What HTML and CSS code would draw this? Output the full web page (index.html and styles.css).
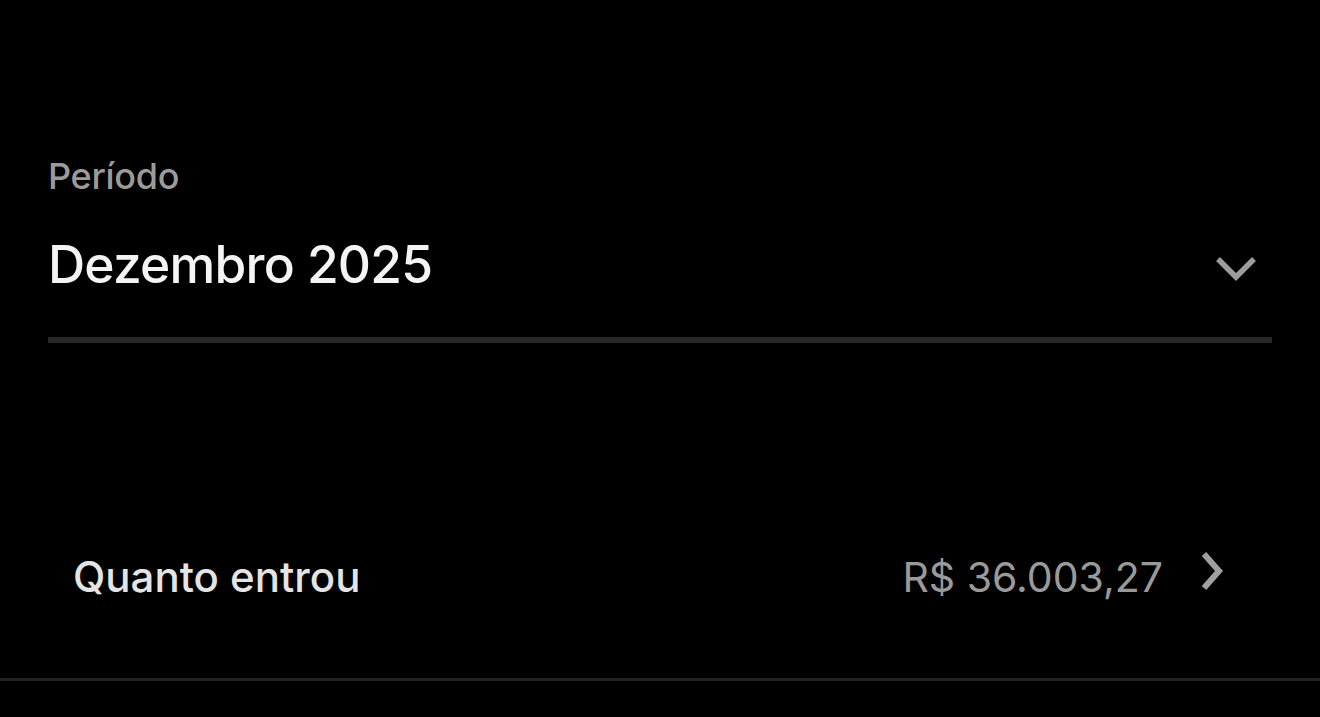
FILE: index.html
```html
<!DOCTYPE html>
<html lang="pt-BR">
<head>
    <meta charset="UTF-8">
    <title>Período</title>
    <link rel="stylesheet" href="styles.css">
</head>
<body>
<div class="period">
    <p class="period-label">Período</p>
    <div class="period-select">
        <span class="period-value">Dezembro 2025</span>
        <svg class="chevron-down" width="40" height="26" viewBox="0 0 40 26">
            <polyline points="2,3 20,21 38,3" fill="none" stroke="#9c9c9c" stroke-width="5.5"/>
        </svg>
    </div>
</div>
<div class="summary-row">
    <span class="row-title">Quanto entrou</span>
    <div class="row-end">
        <span class="row-amount">R$ 36.003,27</span>
        <svg class="chevron-right" width="24" height="40" viewBox="0 0 24 40">
            <polyline points="4,3 19,20 4,37" fill="none" stroke="#a0a0a0" stroke-width="6"/>
        </svg>
    </div>
</div>
</body>
</html>
```

FILE: styles.css
```css
body {
    margin: 0;
    background: #000000;
    font-family: Inter, "Noto Sans", sans-serif;
    overflow: hidden;
}

.period {
    padding: 152px 48px 0 48px;
}

.period-label {
    margin: 0;
    font-size: 36px;
    line-height: 48px;
    font-weight: 500;
    color: #9b9b9b;
    letter-spacing: -0.3px;
}

.period-select {
    display: flex;
    align-items: center;
    justify-content: space-between;
    padding: 34px 16px 43px 0;
    border-bottom: 6px solid #262626;
}

.period-value {
    font-size: 51.5px;
    line-height: 60px;
    font-weight: 500;
    color: #f4f4f4;
    letter-spacing: -0.8px;
}

.chevron-down {
    margin-top: 10px;
}

.summary-row {
    display: flex;
    align-items: center;
    justify-content: space-between;
    margin-top: 208px;
    padding: 0 96px 75px 73px;
    border-bottom: 3px solid #222222;
}

.row-title {
    font-size: 42px;
    line-height: 50px;
    font-weight: 500;
    color: #e4e4e4;
}

.row-end {
    display: flex;
    align-items: center;
    gap: 37px;
}

.row-amount {
    font-size: 41px;
    line-height: 50px;
    color: #9a9a9a;
}

.chevron-right {
    margin-bottom: 12px;
}
```
